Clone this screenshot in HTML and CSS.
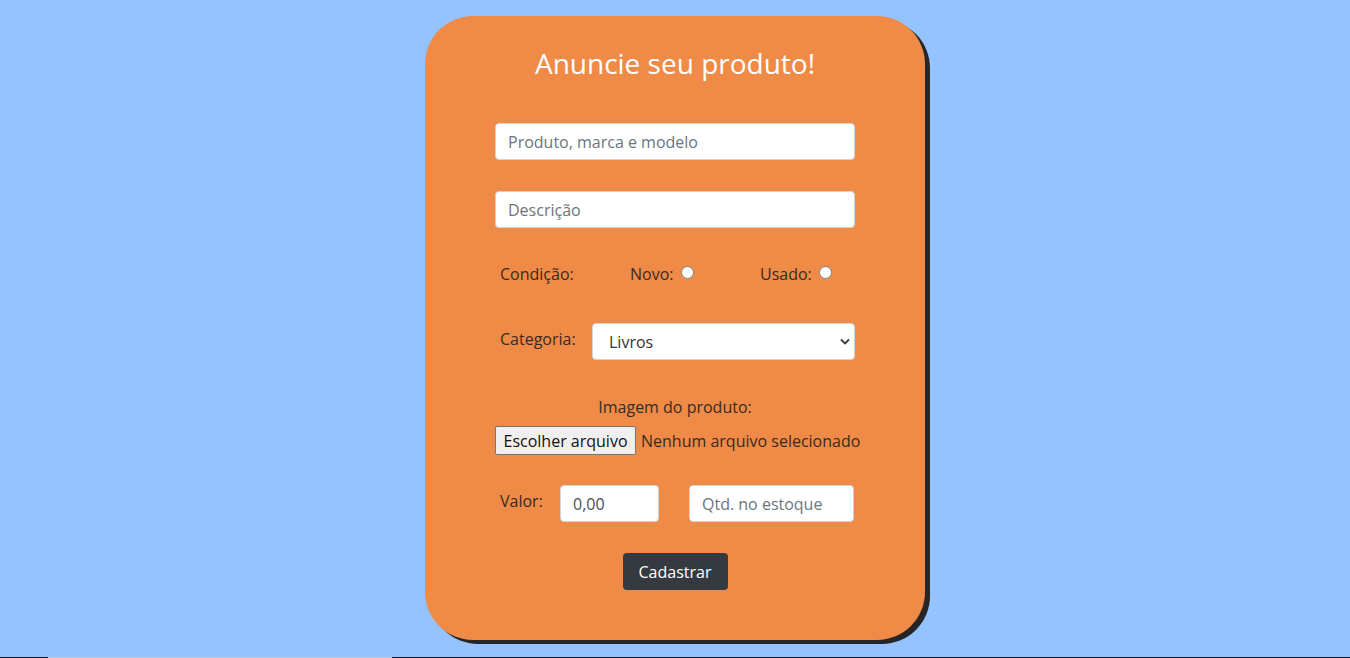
FILE: index.html
```html
<!DOCTYPE html>
<html lang="pt-BR">
<head>
<meta charset="utf-8">
<title>Anuncie seu produto</title>
<link rel="stylesheet" href="styles.css">
</head>
<body>
<main class="page">
  <form class="card">
    <h1 class="title">Anuncie seu produto!</h1>
    <input class="field field-wide first" type="text" placeholder="Produto, marca e modelo">
    <input class="field field-wide second" type="text" placeholder="Descrição">
    <div class="row cond">
      <span class="lbl">Condição:</span>
      <label class="opt">Novo: <input type="radio" name="cond"></label>
      <label class="opt">Usado: <input type="radio" name="cond"></label>
    </div>
    <div class="row cat">
      <span class="lbl cat-lbl">Categoria:</span>
      <div class="select">
        <span>Livros</span>
        <svg width="10" height="7" viewBox="0 0 10 7"><path d="M1 1.5 L5 5.5 L9 1.5" fill="none" stroke="#343a40" stroke-width="1.8"/></svg>
      </div>
    </div>
    <div class="img-lbl">Imagem do produto:</div>
    <div class="file">
      <span class="file-btn">Escolher arquivo</span>
      <span class="file-txt">Nenhum arquivo selecionado</span>
    </div>
    <div class="row valor">
      <span class="lbl val-lbl">Valor:</span>
      <input class="field price" type="text" value="0,00">
      <input class="field qty" type="text" placeholder="Qtd. no estoque">
    </div>
    <div class="actions">
      <button class="btn" type="button">Cadastrar</button>
    </div>
  </form>
  <div class="strip"></div>
</main>
</body>
</html>
```

FILE: styles.css
```css
* { box-sizing: border-box; }
html, body { margin: 0; padding: 0; }
body {
  background: #94c3ff;
  font-family: "Open Sans", "Liberation Sans", sans-serif;
  color: #3a2a20;
  overflow: hidden;
  height: 658px;
}
.page {
  display: flex;
  flex-direction: column;
  align-items: center;
  padding-top: 16px;
}
.card {
  width: 500px;
  height: 624px;
  background: #ef8a47;
  border-radius: 48px;
  box-shadow: 5px 4px 0 #262626;
  padding: 0 70px;
  display: flex;
  flex-direction: column;
}
.title {
  margin: 27px 0 0;
  height: 40px;
  line-height: 40px;
  text-align: center;
  font-weight: 400;
  font-size: 28px;
  color: #fff;
}
.field {
  height: 37px;
  border: 1px solid #ced4da;
  border-radius: 4px;
  background: #fff;
  font-family: inherit;
  font-size: 16px;
  color: #495057;
  padding: 0 12px;
  outline: none;
}
.field::placeholder { color: #6c757d; opacity: 1; }
.field-wide { width: 360px; }
.first { margin-top: 40px; }
.second { margin-top: 31px; }
.row { display: flex; }
.lbl { font-size: 16px; flex: none; }
.cond {
  margin-top: 35px;
  padding-left: 5px;
  height: 22px;
  align-items: center;
}
.cond .lbl { width: 130px; }
.opt { flex: none; width: 130px; font-size: 16px; display: flex; align-items: center; }
.opt:last-child { width: auto; }
.opt input { margin: 0 0 4px 7px; width: 13px; height: 13px; }
.cat {
  margin-top: 38px;
  align-items: flex-start;
}
.cat-lbl { width: 97px; padding-left: 5px; padding-top: 5px; }
.select {
  width: 263px;
  height: 37px;
  background: #fff;
  border: 1px solid #ced4da;
  border-radius: 4px;
  display: flex;
  align-items: center;
  justify-content: space-between;
  padding: 0 4px 0 16px;
  font-size: 16px;
  color: #333;
}
.img-lbl {
  margin-top: 36px;
  text-align: center;
  font-size: 16px;
  height: 22px;
  line-height: 22px;
}
.file {
  margin-top: 8px;
  display: flex;
  align-items: center;
  white-space: nowrap;
}
.file-btn {
  flex: none;
  height: 29px;
  width: 141px;
  border: 1px solid #767676;
  border-radius: 2px;
  background: #efefef;
  color: #111;
  font-size: 16px;
  display: flex;
  align-items: center;
  justify-content: center;
}
.file-txt { margin-left: 5px; font-size: 16px; }
.valor {
  margin-top: 30px;
  align-items: flex-start;
}
.val-lbl { width: 65px; padding-left: 5px; padding-top: 5px; }
.price { width: 99px; }
.qty { width: 165px; margin-left: 30px; }
.actions {
  margin-top: 31px;
  display: flex;
  justify-content: center;
}
.btn {
  height: 37px;
  width: 105px;
  background: #343a40;
  color: #fff;
  border: none;
  border-radius: 4px;
  font-family: inherit;
  font-size: 16px;
}
.strip {
  margin-top: 17px;
  width: 100%;
  height: 1px;
  background: linear-gradient(to right, #0c1d3f 0 48px, #c8c8d0 48px 392px, #0c1d3f 392px);
}
```
